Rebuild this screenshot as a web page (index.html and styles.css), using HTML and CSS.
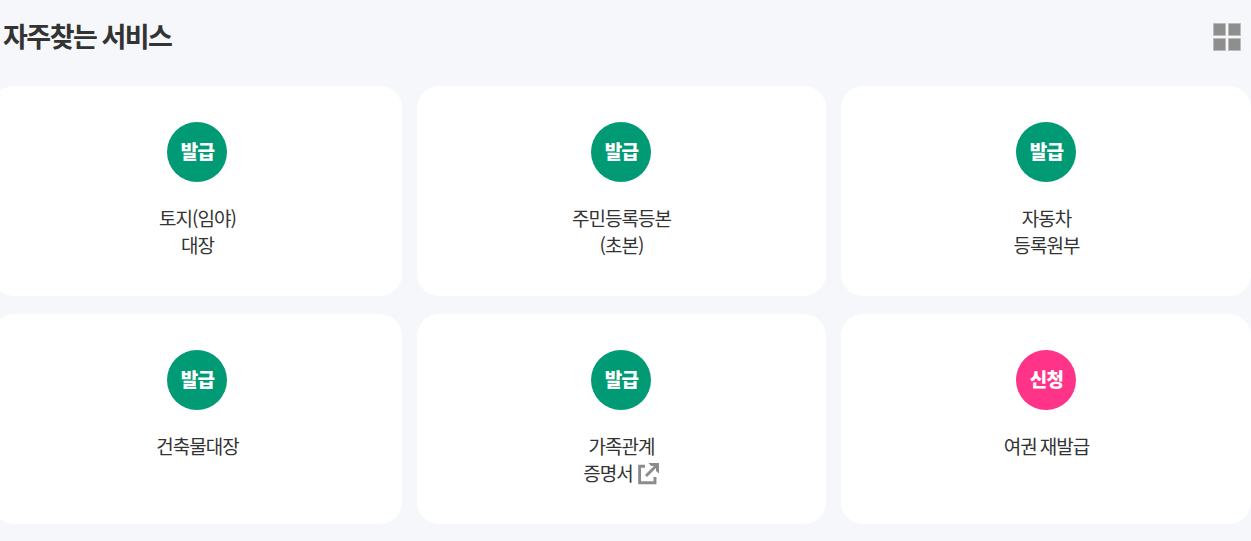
FILE: index.html
```html
<!DOCTYPE html>
<html lang="ko">
<head>
<meta charset="utf-8">
<title>자주찾는 서비스</title>
<link rel="stylesheet" href="styles.css">
</head>
<body>
<section class="services">
  <header class="header">
    <h2 class="title">자주찾는 서비스</h2>
    <svg class="grid-icon" width="28" height="28" viewBox="0 0 28 28" role="img" aria-label="전체"><path fill="#8e8e8e" stroke="#bcbcbc" d="M.5.5h12v12H.5zM15.500.5h12v12h-12zM.5 15.500h12v12H.5zM15.500 15.500h12v12h-12z"/></svg>
  </header>
  <ul class="cards">
    <li class="card"><span class="badge">발급</span><span class="name">토지(임야)<br>대장</span></li>
    <li class="card"><span class="badge">발급</span><span class="name">주민등록등본<br>(초본)</span></li>
    <li class="card"><span class="badge">발급</span><span class="name">자동차<br>등록원부</span></li>
    <li class="card"><span class="badge">발급</span><span class="name">건축물대장</span></li>
    <li class="card"><span class="badge">발급</span><span class="name">가족관계<br><span class="linked">증명서<svg class="ext" width="22" height="22" viewBox="0 0 22 22"><path fill="none" stroke="#8c8c8c" stroke-width="2.900" d="M7 3.200H1.600V19.800H17V14M18.500 2.500L8 13"/><path fill="#8c8c8c" d="M10.500 0H21V10.500L18 8V3H13z"/></svg></span></span></li>
    <li class="card"><span class="badge apply">신청</span><span class="name">여권 재발급</span></li>
  </ul>
</section>
</body>
</html>
```

FILE: styles.css
```css
* { box-sizing: border-box; }
body {
  margin: 0;
  height: 541px;
  overflow: hidden;
  background: #f5f7fb;
  color: #333;
  font-family: "Noto Sans CJK KR", sans-serif;
}
.header {
  display: flex;
  align-items: center;
  justify-content: space-between;
  height: 86px;
  padding: 0 10px 12px 3px;
}
.title {
  margin: 0 0 2px;
  font-size: 27px;
  line-height: 38px;
  font-weight: 700;
  letter-spacing: -1.5px;
  word-spacing: -1px;
}
.grid-icon { display: block; }
.cards {
  display: grid;
  grid-template-columns: 410px 409px 410px;
  grid-auto-rows: 210px;
  gap: 18px 15px;
  margin: 0 0 0 -8px;
  padding: 0;
  list-style: none;
}
.card {
  display: flex;
  flex-direction: column;
  align-items: center;
  padding-top: 36px;
  border-radius: 22px;
  background: #fff;
}
.card:nth-child(3n + 2) { padding-right: 1px; }
.badge {
  width: 60px;
  height: 60px;
  padding-left: 1px;
  border-radius: 50%;
  background: #009a74;
  color: #fff;
  font-size: 19px;
  font-weight: 900;
  line-height: 57px;
  letter-spacing: -0.8px;
  text-align: center;
}
.apply { background: #ff3388; }
.name {
  margin-top: 22px;
  padding-left: 1px;
  font-size: 19px;
  line-height: 27px;
  letter-spacing: -0.95px;
  word-spacing: -1.5px;
  text-align: center;
}
.linked { display: inline-flex; align-items: center; gap: 5px; }
.ext { display: block; margin-top: 2px; }
```
